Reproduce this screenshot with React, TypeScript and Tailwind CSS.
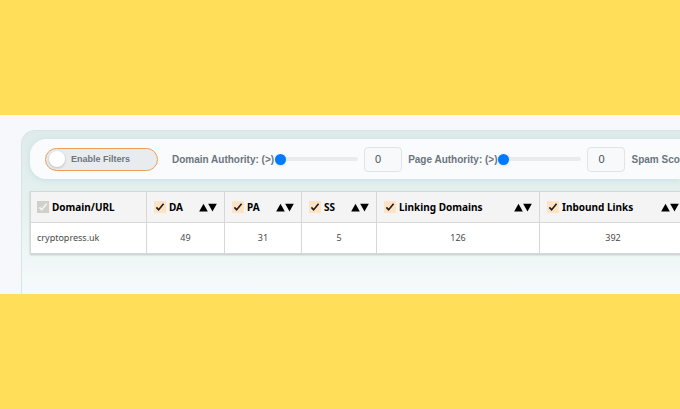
import { useState } from "react";

type Column = {
  label: string;
  width: string;
};

const columns: Column[] = [
  { label: "DA", width: "w-[78px]" },
  { label: "PA", width: "w-[77px]" },
  { label: "SS", width: "w-[75px]" },
  { label: "Linking Domains", width: "w-[163px]" },
  { label: "Inbound Links", width: "w-[147px]" },
];

const rows = [{ domain: "cryptopress.uk", values: [49, 31, 5, 126, 392] }];

function Tick({ className }: { className: string }) {
  return (
    <svg viewBox="0 0 12 12" className={`pointer-events-none col-start-1 row-start-1 size-3 ${className}`} fill="none" stroke="currentColor">
      <path d="M2.4 6.4 L4.6 8.8 L9.6 2.8" strokeWidth="1.6" />
    </svg>
  );
}

function ColumnCheck({ label, disabled = false }: { label: string; disabled?: boolean }) {
  return (
    <label className="flex items-center gap-[3px]">
      <span className="grid size-3 shrink-0">
        <input
          type="checkbox"
          defaultChecked
          disabled={disabled}
          className="peer col-start-1 row-start-1 size-3 appearance-none bg-[#ffe3c4] disabled:bg-[#cfcfcc]"
        />
        <Tick className={`invisible peer-checked:visible ${disabled ? "text-[#f4f4f4]" : "text-[#1c1c1c]"}`} />
      </span>
      {label}
    </label>
  );
}

function SortButtons({ label }: { label: string }) {
  return (
    <span className="flex">
      <button type="button" aria-label={`Sort ${label} ascending`}>
        <svg viewBox="0 0 9 9" className="size-[9px]" fill="black">
          <path d="M4.5 0.8 L8.8 8.4 H0.2 Z" />
        </svg>
      </button>
      <button type="button" aria-label={`Sort ${label} descending`}>
        <svg viewBox="0 0 9 9" className="size-[9px]" fill="black">
          <path d="M4.5 8.4 L0.2 0.8 H8.8 Z" />
        </svg>
      </button>
    </span>
  );
}

function RangeFilter({ id, label }: { id: string; label: string }) {
  const [value, setValue] = useState(0);

  return (
    <div className="flex shrink-0 items-center">
      <label htmlFor={id} className="whitespace-nowrap">
        {label}: (&gt;)
      </label>
      <input
        id={id}
        type="range"
        min={0}
        max={100}
        value={value}
        onChange={(e) => setValue(Number(e.target.value))}
        className="ml-px h-1 w-[83px] appearance-none rounded-full bg-[#e9ecef] [&::-webkit-slider-thumb]:size-[11px] [&::-webkit-slider-thumb]:appearance-none [&::-webkit-slider-thumb]:rounded-full [&::-webkit-slider-thumb]:bg-[#007bff] [&::-webkit-slider-thumb]:shadow-sm"
      />
      <input
        type="text"
        aria-label={`${label} value`}
        value={value}
        onChange={(e) => setValue(Number(e.target.value) || 0)}
        className="ml-1.5 h-[25px] w-[38px] rounded-[4px] border border-[#e1e3e6] bg-[#f8f9fa] pr-2.5 text-center text-[11px] font-normal text-[#495057]"
      />
    </div>
  );
}

function FilterBar() {
  return (
    <div className="flex h-10 items-center overflow-hidden rounded-l-2xl bg-[#f9fbfd] pl-[15px] font-['Liberation_Sans',sans-serif] text-[10px] font-bold text-[#6c757d] shadow-[0_1px_6px_#c3dfe2]">
      <label className="flex h-[23px] w-[113px] shrink-0 items-center rounded-full border border-[#ee9d58] bg-[#e9ecef] pl-[3px] text-[9px]">
        <input type="checkbox" role="switch" className="size-4 appearance-none rounded-full bg-white shadow-[0_1px_3px_#0003]" />
        <span className="pt-0.5 pl-1.5">Enable Filters</span>
      </label>
      <div className="flex gap-1.5 pl-3.5">
        <RangeFilter id="domain-authority" label="Domain Authority" />
        <RangeFilter id="page-authority" label="Page Authority" />
        <RangeFilter id="spam-score" label="Spam Score" />
      </div>
    </div>
  );
}

function ResultsTable() {
  return (
    <table className="w-full min-w-[656px] table-fixed border-collapse bg-white text-[10px] shadow-[0_1px_2px_#0003]">
      <thead>
        <tr className="h-[31px] bg-[#f4f4f4] text-black">
          <th className="w-[116px] border border-[#d6d8d7] px-1.5">
            <ColumnCheck label="Domain/URL" disabled />
          </th>
          {columns.map((col) => (
            <th key={col.label} className={`border border-[#d6d8d7] px-[7px] ${col.width}`}>
              <div className="flex items-center justify-between">
                <ColumnCheck label={col.label} />
                <SortButtons label={col.label} />
              </div>
            </th>
          ))}
        </tr>
      </thead>
      <tbody>
        {rows.map((row) => (
          <tr key={row.domain} className="h-[31px] text-[9px] text-[#4a4a4a]">
            <td className="border border-[#d6d8d7] px-1.5">{row.domain}</td>
            {row.values.map((value, i) => (
              <td key={columns[i].label} className="border border-[#d6d8d7] text-center">
                {value}
              </td>
            ))}
          </tr>
        ))}
      </tbody>
    </table>
  );
}

export default function App() {
  return (
    <div className="flex min-h-screen flex-col justify-center bg-[#ffde59] font-['Noto_Sans',sans-serif]">
      <main className="overflow-hidden bg-[#f7f8fc] pt-[15px] pl-[21px]">
        <section className="rounded-tl-[14px] border-t border-l border-[#d9e5e5] bg-linear-to-b from-[#dfebea] via-[#e6f2f0] to-[#f7fafc] pt-2 pb-10 pl-2">
          <FilterBar />
          <div className="pt-3">
            <ResultsTable />
          </div>
        </section>
      </main>
    </div>
  );
}
